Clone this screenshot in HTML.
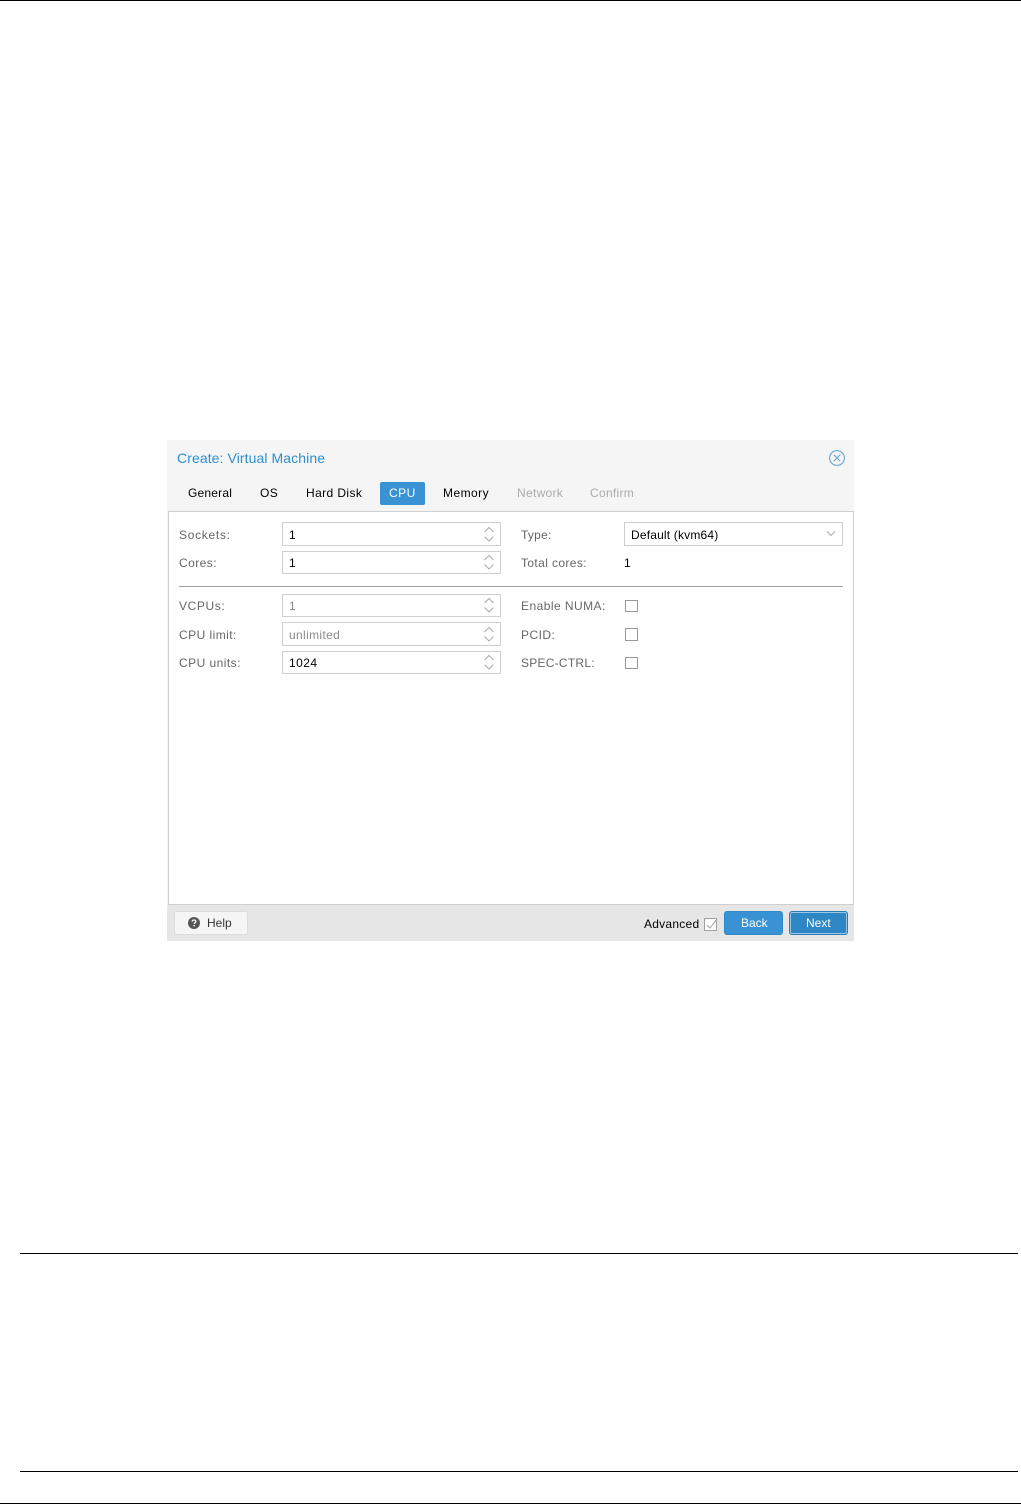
<!DOCTYPE html>
<html><head><meta charset="utf-8"><style>
html,body{margin:0;padding:0;background:#fff}
body{position:relative;width:1021px;height:1504px;overflow:hidden;font-family:"Liberation Sans",sans-serif}
.a{position:absolute}
.t{position:absolute;font-size:12px;line-height:14px;white-space:nowrap;letter-spacing:.45px}
.l{color:#666}
.k{color:#000}
.box{position:absolute;box-sizing:border-box;background:#fff;border:1px solid #cfcfcf}
.cb{position:absolute;box-sizing:border-box;width:13px;height:12px;background:#fff;border:1px solid #999}
svg{position:absolute;overflow:visible}
</style></head><body>
<div class="a" style="left:0;top:0;width:1021px;height:1px;background:#000"></div>
<div class="a" style="left:20px;top:1253px;width:998px;height:1px;background:#000"></div>
<div class="a" style="left:20px;top:1471px;width:998px;height:1px;background:#000"></div>
<div class="a" style="left:0;top:1503px;width:1021px;height:1px;background:#000"></div>

<div class="a" style="left:167px;top:440px;width:687px;height:501px;background:#f5f5f5"></div>
<div class="a" style="left:167px;top:905px;width:687px;height:36px;background:#e6e6e6"></div>
<div class="a" style="left:168px;top:511px;width:686px;height:394px;box-sizing:border-box;background:#fff;border:1px solid #cfcfcf"></div>

<div class="t" style="left:177px;top:450px;font-size:14px;line-height:16px;letter-spacing:.09px;color:#2b8fd0">Create: Virtual Machine</div>
<svg style="left:829px;top:450px" width="16" height="16" viewBox="0 0 16 16" fill="none" stroke="#5b9fcf" stroke-width="1"><circle cx="8" cy="8" r="7.4"/><path d="M4.8 4.8L11.2 11.2M11.2 4.8L4.8 11.2"/></svg>

<div class="t k" style="left:188px;top:486px;letter-spacing:.2px">General</div>
<div class="t k" style="left:260px;top:486px">OS</div>
<div class="t k" style="left:306px;top:486px;letter-spacing:.4px">Hard Disk</div>
<div class="a" style="left:380px;top:482px;width:45px;height:23px;background:#3892d4;border-radius:2px"></div>
<div class="t" style="left:389px;top:486px;color:#fff">CPU</div>
<div class="t k" style="left:443px;top:486px">Memory</div>
<div class="t" style="left:517px;top:486px;color:#ababab;letter-spacing:.3px">Network</div>
<div class="t" style="left:590px;top:486px;color:#ababab;letter-spacing:.3px">Confirm</div>

<div class="t l" style="left:179px;top:528px;letter-spacing:.7px">Sockets:</div>
<div class="box" style="left:282px;top:522px;width:219px;height:24px"></div>
<div class="t k" style="left:289px;top:528px;letter-spacing:0">1</div>
<div class="t l" style="left:179px;top:556px">Cores:</div>
<div class="box" style="left:282px;top:551px;width:219px;height:23px"></div>
<div class="t k" style="left:289px;top:556px;letter-spacing:0">1</div>

<div class="a" style="left:179px;top:586px;width:664px;height:1px;background:#a0a0a0"></div>

<div class="t l" style="left:179px;top:599px;letter-spacing:.6px">VCPUs:</div>
<div class="box" style="left:282px;top:594px;width:219px;height:23px"></div>
<div class="t" style="left:289px;top:599px;color:#8c8c8c;letter-spacing:0">1</div>
<div class="t l" style="left:179px;top:628px">CPU limit:</div>
<div class="box" style="left:282px;top:622px;width:219px;height:24px"></div>
<div class="t" style="left:289px;top:628px;color:#8c8c8c;letter-spacing:.35px">unlimited</div>
<div class="t l" style="left:179px;top:656px">CPU units:</div>
<div class="box" style="left:282px;top:651px;width:219px;height:23px"></div>
<div class="t k" style="left:289px;top:656px">1024</div>

<div class="t l" style="left:521px;top:528px;letter-spacing:.25px">Type:</div>
<div class="box" style="left:624px;top:522px;width:219px;height:24px"></div>
<div class="t k" style="left:631px;top:528px;letter-spacing:.18px">Default (kvm64)</div>
<div class="t l" style="left:521px;top:556px;letter-spacing:.38px">Total cores:</div>
<div class="t k" style="left:624px;top:556px;letter-spacing:0">1</div>

<svg style="left:0;top:0" width="1021" height="1504" fill="none" stroke="#ababab" stroke-width="1">
<path d="M484.5 532L489 527.5L493.5 532M484.5 536.5L489 541L493.5 536.5"/>
<path d="M484.5 560L489 555.5L493.5 560M484.5 564.5L489 569L493.5 564.5"/>
<path d="M484.5 603L489 598.5L493.5 603M484.5 607.5L489 612L493.5 607.5"/>
<path d="M484.5 632L489 627.5L493.5 632M484.5 636.5L489 641L493.5 636.5"/>
<path d="M484.5 660L489 655.5L493.5 660M484.5 664.5L489 669L493.5 664.5"/>
<path d="M827 531.5L831 535.5L835 531.5"/>
</svg>

<div class="t l" style="left:521px;top:599px">Enable NUMA:</div>
<div class="cb" style="left:625px;top:600px"></div>
<div class="t l" style="left:521px;top:628px">PCID:</div>
<div class="cb" style="left:625px;top:628px;height:13px"></div>
<div class="t l" style="left:521px;top:656px;letter-spacing:.25px">SPEC-CTRL:</div>
<div class="cb" style="left:625px;top:657px"></div>

<div class="a" style="left:174px;top:911px;width:74px;height:24px;box-sizing:border-box;background:#f5f5f5;border:1px solid #dcdcdc;border-radius:3px"></div>
<svg style="left:188px;top:917px" width="12" height="12" viewBox="0 0 12 12"><circle cx="6" cy="6" r="6" fill="#555"/><path d="M4.1 4.6C4.2 3.5 5 3 6 3C7.1 3 7.9 3.6 7.9 4.5C7.9 5.6 6.2 5.7 6.2 7" fill="none" stroke="#f5f5f5" stroke-width="1.3"/><rect x="5.4" y="8" width="1.5" height="1.4" fill="#f5f5f5"/></svg>
<div class="t" style="left:207px;top:916px;color:#333;letter-spacing:0">Help</div>

<div class="t k" style="left:644px;top:917px;letter-spacing:.25px">Advanced</div>
<div class="a" style="left:704px;top:918px;width:13px;height:13px;box-sizing:border-box;background:#fff;border:1px solid #a0a0a0"></div>
<svg style="left:704px;top:917px" width="14" height="14" fill="none" stroke="#a0a0a0" stroke-width="1"><path d="M3 8L6 11L13 2"/></svg>

<div class="a" style="left:724px;top:911px;width:59px;height:24px;box-sizing:border-box;background:#3892d4;border:1px solid #3088c8;border-radius:3px"></div>
<div class="t" style="left:741px;top:916px;color:#fff;letter-spacing:0">Back</div>
<div class="a" style="left:789px;top:911px;width:59px;height:24px;box-sizing:border-box;background:#2f86c4;border:1px solid #2a7ab5;box-shadow:inset 0 0 0 1px #9cc8e8;border-radius:3px"></div>
<div class="t" style="left:806px;top:916px;color:#fff;letter-spacing:0">Next</div>
</body></html>
